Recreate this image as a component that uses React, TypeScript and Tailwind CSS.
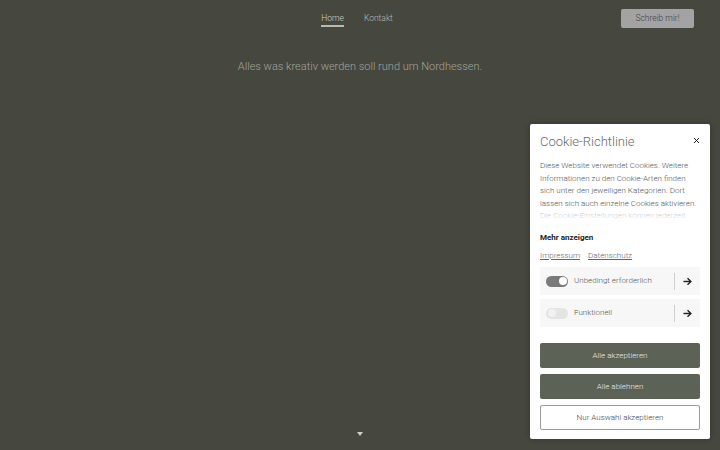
import { X } from "lucide-react";

function Arrow() {
  return (
    <svg width="10" height="9" viewBox="0 0 10 9" fill="none">
      <path d="M0.5 4.5H8.5" stroke="#222" strokeWidth="1.6" />
      <path d="M5 1L8.7 4.5L5 8" stroke="#222" strokeWidth="1.6" />
    </svg>
  );
}

function CookieRow({ label, on }: { label: string; on: boolean }) {
  return (
    <div className="flex h-[28px] items-center bg-[#f7f7f7] pl-[6px] pr-[8px]">
      <div
        className={`flex h-[11px] w-[22px] items-center rounded-full px-[1.5px] ${
          on ? "justify-end bg-[#7a7a7a]" : "justify-start bg-[#e4e4e4]"
        }`}
      >
        <div
          className={`h-[8px] w-[8px] rounded-full ${
            on ? "bg-white" : "bg-[#f1f1f1]"
          }`}
        />
      </div>
      <span className="ml-[6px] flex-1 text-[8px] font-light text-[#555]">{label}</span>
      <div className="h-[17px] w-px bg-[#cfcfcf]" />
      <div className="ml-[8px] flex w-[9px] justify-center">
        <Arrow />
      </div>
    </div>
  );
}

export default function App() {
  return (
    <div className="relative h-[450px] w-[720px] overflow-hidden bg-[#46483f] font-['Roboto',sans-serif]">
      {/* Header */}
      <header className="grid h-[37px] grid-cols-[1fr_auto_1fr] items-center">
        <div />
        <nav className="flex items-center gap-[20px] pr-[6px] text-[8.5px] font-light">
          <a className="relative text-[#cfcfc8]">
            Home
            <span className="absolute left-0 right-0 top-[13px] h-[1.5px] bg-[#b9b9b2]" />
          </a>
          <a className="text-[#b9b9b2]">Kontakt</a>
        </nav>
        <div className="flex justify-end pr-[26px]">
          <button className="h-[19px] w-[73px] rounded-[2px] bg-[#a3a3a3] text-[8.5px] font-light text-[#3f3f3f]">
            Schreib mir!
          </button>
        </div>
      </header>

      {/* Hero */}
      <p className="mt-[22px] text-center text-[11px] font-light leading-[16px] text-[#a3a49b]">
        Alles was kreativ werden soll rund um Nordhessen.
      </p>

      {/* Scroll hint */}
      <div className="absolute bottom-[14px] left-[357px] h-0 w-0 border-x-[3.5px] border-t-[4px] border-x-transparent border-t-[#cfcfc8]" />

      {/* Cookie panel */}
      <div className="absolute bottom-[11px] right-[10px] flex w-[180px] flex-col rounded-[2px] bg-white px-[10px] pb-[9px] pt-[10px] shadow-[0_0_6px_rgba(0,0,0,0.25)]">
        <div className="flex items-start justify-between">
          <h2 className="text-[13px] font-light leading-[16px] text-[#6a6a6a]">
            Cookie-Richtlinie
          </h2>
          <X size={9} strokeWidth={2.6} className="mr-[-1px] mt-[2px] text-[#222]" />
        </div>

        <div className="relative mt-[10px] h-[62px] overflow-hidden text-[8px] font-light leading-[12.5px] text-[#555]">
          <p>
            Diese Website verwendet Cookies. Weitere Informationen zu den
            Cookie-Arten finden sich unter den jeweiligen Kategorien. Dort
            lassen sich auch einzelne Cookies aktivieren. Die
            Cookie-Einstellungen können jederzeit geändert werden.
          </p>
          <div className="absolute bottom-0 left-0 right-0 h-[14px] bg-gradient-to-b from-white/40 to-white" />
        </div>

        <p className="mt-[10px] text-[8px] font-bold leading-[12px] text-[#222]">
          Mehr anzeigen
        </p>

        <div className="mt-[6px] flex gap-[8px] text-[8px] font-light leading-[12px] text-[#666]">
          <a className="underline">Impressum</a>
          <a className="underline">Datenschutz</a>
        </div>

        <div className="mt-[5px] flex flex-col gap-[4px]">
          <CookieRow label="Unbedingt erforderlich" on />
          <CookieRow label="Funktionell" on={false} />
        </div>

        <div className="mt-[16px] flex flex-col gap-[6px] text-[8px] font-light">
          <button className="h-[25px] rounded-[2px] bg-[#5d6256] text-[#ecece8]">
            Alle akzeptieren
          </button>
          <button className="h-[25px] rounded-[2px] bg-[#5d6256] text-[#ecece8]">
            Alle ablehnen
          </button>
          <button className="h-[25px] rounded-[2px] border border-[#9a9a9a] bg-white text-[#444]">
            Nur Auswahl akzeptieren
          </button>
        </div>
      </div>
    </div>
  );
}
